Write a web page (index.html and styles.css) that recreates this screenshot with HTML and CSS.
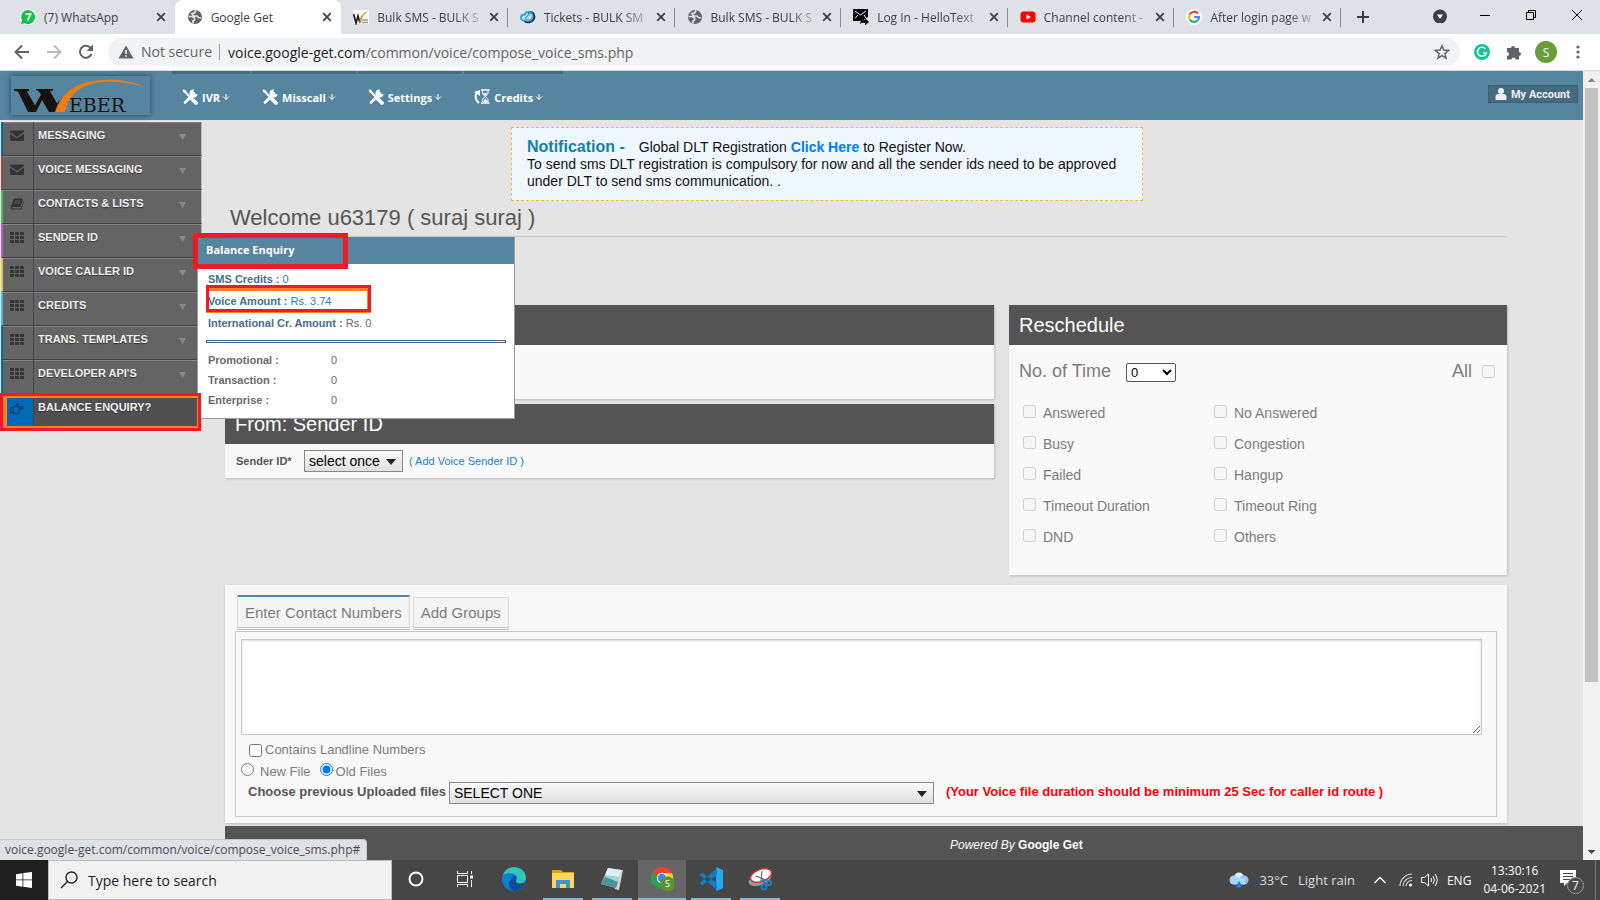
FILE: index.html
```html
<!DOCTYPE html>
<html lang="en">
<head>
<meta charset="utf-8">
<title>Google Get</title>
<link rel="stylesheet" href="styles.css">
</head>
<body>
<svg width="0" height="0" class="defs" aria-hidden="true">
  <symbol id="x" viewBox="0 0 10 10"><path d="M1.2 1.2l7.6 7.6M8.8 1.2L1.2 8.800" stroke="#3c4043" stroke-width="1.8" fill="none"/></symbol>
  <symbol id="globe" viewBox="0 0 16 16"><circle cx="8" cy="8" r="7" fill="#5f6368"/><path d="M1.500 7.500h4l2 1.500v2l-1.500 1v2.500M9 1.500L7.500 4 5 4.500 6.500 7H10l1.500 1.500L14 9" stroke="#e4e6ea" stroke-width="1.700" fill="none"/></symbol>
  <symbol id="tools" viewBox="0 0 16 16"><path d="M3 13.500L12 4.500" stroke="#fff" stroke-width="2.800" stroke-linecap="round"/><path d="M11.800 0.500a4 4 0 1 0 3.700 4.200l-2.300 0.800-1.700-1.500z" fill="#fff"/><path d="M2 1.800L9 9" stroke="#fff" stroke-width="2"/><path d="M9.500 9.500l4.500 4.500" stroke="#fff" stroke-width="3.800" stroke-linecap="round"/><path d="M0.500 1.500l1.200-1.200 2.600 1.700-2 2z" fill="#fff"/></symbol>
  <symbol id="down" viewBox="0 0 8 8"><path d="M4 1v5.500M1 3.500l3 3 3-3" stroke="#fff" stroke-width="1" fill="none"/></symbol>
  <symbol id="mail" viewBox="0 0 14 12"><path d="M0 1.500Q0 0.500 1 0.500h12q1 0 1 1v0.600L7 7 0 2.100z" fill="#333"/><path d="M0 3.800L7 8.500l7-4.700V10q0 1-1 1H1q-1 0-1-1z" fill="#333"/></symbol>
  <symbol id="grid" viewBox="0 0 14 12"><path d="M0 0h4v3H0zM5 0h4v3H5zM10 0h4v3h-4zM0 4h4v3H0zM5 4h4v3H5zM10 4h4v3h-4zM0 8h4v3H0zM5 8h4v3H5zM10 8h4v3h-4z" fill="#363636"/></symbol>
  <symbol id="book" viewBox="0 0 14 12"><path d="M4 0.500h9L10.500 9H2.500q-1 1 0 1.500h8.500L13.500 3l0.300 0.500-2 8H1.800Q0 11 0.800 8.500z" fill="#333"/><path d="M5 3h5.500M4.500 5H10" stroke="#666" stroke-width="0.800"/></symbol>
</svg>

<div class="window">
  <header class="tabstrip">
    <nav class="tabs" aria-label="Open tabs">
      <a class="tab" href="#"><svg viewBox="0 0 16 16"><circle cx="8" cy="8" r="8" fill="#fff"/><path d="M8 1a7 7 0 1 1-3.200 13.200L1 15l1-3.600A7 7 0 0 1 8 1z" fill="#10c24a"/><path d="M5.500 5.200h5L7.500 11.500" stroke="#fff" stroke-width="1.800" fill="none"/></svg><span>(7) WhatsApp</span><svg class="close"><use href="#x"/></svg></a>
      <a class="tab current" href="#"><svg><use href="#globe"/></svg><span>Google Get</span><svg class="close"><use href="#x"/></svg></a>
      <a class="tab long" href="#"><svg viewBox="0 0 16 16"><path fill="#fff" d="M0 1h16v14H0z"/><path d="M0.500 5l2.500 9 2-7 2 7" stroke="#222" stroke-width="1.800" fill="none"/><path d="M6 14Q8 2 16 2.500 9 4 8 14z" fill="#ec7d14"/><path d="M9 11h6M9 13.500h6" stroke="#998" stroke-width="1.500"/></svg><span>Bulk SMS - BULK S</span><svg class="close"><use href="#x"/></svg></a>
      <a class="tab long" href="#"><svg viewBox="0 0 16 16"><path d="M8 4Q13 2 14 6q1.500 5-4 7-4 1-5.500-1" stroke="#123450" stroke-width="2" fill="none"/><path d="M5 11.500Q1 11.500 1 8.500t4-3q1-3 4-2.500" stroke="#21aee0" stroke-width="2" fill="none"/><path d="M9 3q4 1 3.500 4.500T8 11 6.500 8t3-1.500" stroke="#21aee0" stroke-width="1.600" fill="none"/></svg><span>Tickets - BULK SM</span><svg class="close"><use href="#x"/></svg></a>
      <a class="tab long" href="#"><svg><use href="#globe"/></svg><span>Bulk SMS - BULK S</span><svg class="close"><use href="#x"/></svg></a>
      <a class="tab long" href="#"><svg viewBox="0 0 16 16"><path d="M0 0h15v8L9 12H0z" fill="#000"/><path d="M2 2l5.500 4L13 2M2 9.500L5 6M13 9l-2-3" stroke="#fff" stroke-width="1" fill="none"/><path d="M7 15q0-4 5-4V9l4 4-4 3.500V14q-3-1-5 1z" fill="#000"/></svg><span>Log In - HelloText</span><svg class="close"><use href="#x"/></svg></a>
      <a class="tab long" href="#"><svg viewBox="0 0 16 16"><rect x="0.500" y="2.500" width="15" height="11" rx="3" fill="#f00"/><path d="M6.500 5.500v5L11 8z" fill="#fff"/></svg><span>Channel content -</span><svg class="close"><use href="#x"/></svg></a>
      <a class="tab long" href="#"><svg viewBox="0 0 16 16"><circle cx="8" cy="8" r="8" fill="#fff"/><g fill="none" stroke-width="2.200"><path d="M12 4.500A5 5 0 0 0 3.700 5.500" stroke="#ea4335"/><path d="M3.700 5.500a5 5 0 0 0 0 5" stroke="#fbbc05"/><path d="M3.700 10.500a5 5 0 0 0 7.800 1" stroke="#34a853"/><path d="M11.500 11.500A5 5 0 0 0 13 8H8.200" stroke="#4285f4"/></g></svg><span>After login page w</span><svg class="close"><use href="#x"/></svg></a>
    </nav>
    <button class="bare newtab" aria-label="New tab"><svg viewBox="0 0 12 12"><path d="M6 0v12M0 6h12" stroke="#3c4043" stroke-width="2"/></svg></button>
    <div class="wincontrols">
      <button class="bare" aria-label="Search tabs"><svg viewBox="0 0 16 16"><circle cx="9" cy="9.500" r="7" fill="#3c4043"/><path d="M6 7.500h6L9 12z" fill="#fff"/></svg></button>
      <button class="bare" aria-label="Minimize"><svg viewBox="0 0 16 16"><path d="M3 8.500h10" stroke="#000"/></svg></button>
      <button class="bare" aria-label="Restore"><svg viewBox="0 0 16 16"><path d="M3.500 5.500h7v7h-7zM5.500 5V3.500h7v7H11" stroke="#000" fill="none"/></svg></button>
      <button class="bare" aria-label="Close"><svg viewBox="0 0 16 16"><path d="M3 3l10 10M13 3L3 13" stroke="#000"/></svg></button>
    </div>
  </header>

  <div class="toolbar">
    <button class="bare" aria-label="Back"><svg viewBox="0 0 16 16"><path d="M15 8H2M8 1.500L1.500 8 8 14.500" stroke="#5f6368" stroke-width="1.900" fill="none"/></svg></button>
    <button class="bare" aria-label="Forward"><svg viewBox="0 0 16 16"><path d="M1 8h13M8 1.500L14.500 8 8 14.500" stroke="#babcbe" stroke-width="1.900" fill="none"/></svg></button>
    <button class="bare" aria-label="Reload"><svg viewBox="0 0 16 16"><path d="M13.500 10A6 6 0 1 1 13 4.500" stroke="#5f6368" stroke-width="2" fill="none"/><path d="M15 0.500V7H8.500z" fill="#5f6368"/></svg></button>
    <div class="omnibox">
      <svg viewBox="0 0 16 16"><path d="M8 1.500L15.500 14.500H0.500z" fill="#5f6368"/><path d="M8 6v4M8 11.200v1.600" stroke="#fff" stroke-width="1.500"/></svg>
      <span class="insecure">Not secure</span>
      <span class="url"><b>voice.google-get.com</b>/common/voice/compose_voice_sms.php</span>
      <svg viewBox="0 0 16 16"><path d="M8 1.800l1.800 4.300 4.700 0.400-3.600 3.100 1.100 4.600-4-2.500-4 2.500 1.100-4.600L1.500 6.500l4.700-0.400z" fill="none" stroke="#5f6368" stroke-width="1.500"/></svg>
    </div>
    <button class="bare ext" aria-label="Grammarly"><svg viewBox="0 0 16 16"><circle cx="8" cy="8" r="8" fill="#15c39a"/><path d="M11.500 5A4.500 4.500 0 1 0 12.300 9H9M12.300 9l-1.500 3" stroke="#fff" stroke-width="1.500" fill="none"/></svg></button>
    <button class="bare ext" aria-label="Extensions"><svg viewBox="0 0 16 16"><path d="M1 4h4a2 2 0 1 1 4 0h4v4a2 2 0 1 1 0 4v3.500H9.500a2 2 0 1 0-4 0H1V12a2 2 0 1 0 0-4z" fill="#5f6368"/></svg></button>
    <button class="bare ext avatar" aria-label="Profile">S</button>
    <button class="bare ext" aria-label="Menu"><svg viewBox="0 0 16 16"><g fill="#5f6368"><circle cx="8" cy="3" r="1.600"/><circle cx="8" cy="8" r="1.600"/><circle cx="8" cy="13" r="1.600"/></g></svg></button>
  </div>

  <div class="viewport">
    <div class="page">
      <header class="site-header">
        <a class="logo" href="#" aria-label="Weber"><svg viewBox="0 0 139 39"><path d="M3 13h15v1.800l-2 0.700 8 14 6-11-2.500-3.500L25 14v-1h17v1.500l-3 0.800 7 12 5-5-4 13.700h-9l-7-12-6 12h-8L7 15.500 3 14.500z" fill="#17120f"/><path d="M44 36Q51 13 76 6 110-1 133 11 108 3 84 7 58 13 54 36z" fill="#ea7d13"/><text x="58" y="36" class="logo-text">EBER</text></svg></a>
        <nav class="mainnav">
          <a href="#"><svg><use href="#tools"/></svg>IVR<svg class="dn"><use href="#down"/></svg></a>
          <a href="#"><svg><use href="#tools"/></svg>Misscall<svg class="dn"><use href="#down"/></svg></a>
          <a href="#"><svg><use href="#tools"/></svg>Settings<svg class="dn"><use href="#down"/></svg></a>
          <a href="#"><svg viewBox="0 0 16 16"><path d="M5 14Q0 10 2.500 4" stroke="#fff" stroke-width="2" fill="none"/><path d="M0 3l6-2v6z" fill="#fff"/><path d="M7 1h8.500M7 14h8.500" stroke="#fff" stroke-width="1.600"/><path d="M8.500 2v2.500L11 7.500 8.500 10.500V13M14 2v2.500L11.500 7.500 14 10.500V13" stroke="#fff" fill="none"/><path d="M9 4h4.500l-2.200 3zM8.800 13l2.500-3.500L14 13z" fill="#fff"/></svg>Credits<svg class="dn"><use href="#down"/></svg></a>
        </nav>
        <button class="account"><svg viewBox="0 0 12 12"><circle cx="6" cy="3" r="3" fill="#f0f0f0"/><path d="M0.500 12V9q0-3 3-3h5q3 0 3 3v3z" fill="#f0f0f0"/></svg>My Account</button>
      </header>

      <div class="body">
        <nav class="sidebar">
          <a class="c-blue" href="#"><i><svg><use href="#mail"/></svg></i><span>MESSAGING</span></a>
          <a class="c-red" href="#"><i><svg><use href="#mail"/></svg></i><span>VOICE MESSAGING</span></a>
          <a class="c-green" href="#"><i><svg><use href="#book"/></svg></i><span>CONTACTS &amp; LISTS</span></a>
          <a class="c-purple" href="#"><i><svg><use href="#grid"/></svg></i><span>SENDER ID</span></a>
          <a class="c-yellow" href="#"><i><svg><use href="#grid"/></svg></i><span>VOICE CALLER ID</span></a>
          <a class="c-cyan" href="#"><i><svg><use href="#grid"/></svg></i><span>CREDITS</span></a>
          <a class="c-blue" href="#"><i><svg><use href="#grid"/></svg></i><span>TRANS. TEMPLATES</span></a>
          <a class="c-blue" href="#"><i><svg><use href="#grid"/></svg></i><span>DEVELOPER API'S</span></a>
          <a class="open" href="#"><i><svg viewBox="0 0 14 12"><path d="M0.600 4.500H3V10H0.600zM3 4.500L5.500 3 7 0.800Q8.500 0.800 8 2.500L7.500 4H12.500q1.200 0.800 0 1.800H8.500M9 5.800q1 0.900 0 1.800M8.800 7.600q0.800 0.900-0.300 1.700M8.500 9.300q0.300 1.500-1.200 1.500H5.500L3 10" fill="none" stroke="#173b57" stroke-width="1.100"/></svg></i><span>BALANCE ENQUIRY?</span></a>
        </nav>

        <main class="main">
          <section class="notice"><strong class="notice-title">Notification -</strong>Global DLT Registration <a href="#">Click Here</a> to Register Now.<br>To send sms DLT registration is compulsory for now and all the sender ids need to be approved under DLT to send sms communication. .</section>
          <h1>Welcome u63179 ( suraj suraj )</h1>

          <div class="columns">
            <div class="left">
              <section class="card first"><h2>&nbsp;</h2><div class="card-body"></div></section>
              <section class="card">
                <h2>From: Sender ID</h2>
                <div class="card-body sender">
                  <label for="sender">Sender ID*</label>
                  <span class="pick"><select id="sender"><option>select once</option></select></span>
                  <a href="#">( Add Voice Sender ID )</a>
                </div>
              </section>
            </div>
            <section class="card resched">
              <h2>Reschedule</h2>
              <div class="card-body">
                <div class="times">
                  <label for="times">No. of Time</label>
                  <select id="times"><option>0</option></select>
                  <label class="all">All <input type="checkbox" disabled></label>
                </div>
                <div class="checks">
                  <label><input type="checkbox" disabled>Answered</label><label><input type="checkbox" disabled>No Answered</label>
                  <label><input type="checkbox" disabled>Busy</label><label><input type="checkbox" disabled>Congestion</label>
                  <label><input type="checkbox" disabled>Failed</label><label><input type="checkbox" disabled>Hangup</label>
                  <label><input type="checkbox" disabled>Timeout Duration</label><label><input type="checkbox" disabled>Timeout Ring</label>
                  <label><input type="checkbox" disabled>DND</label><label><input type="checkbox" disabled>Others</label>
                </div>
              </div>
            </section>
          </div>

          <section class="contacts">
            <div class="ctabs">
              <button class="on">Enter Contact Numbers</button>
              <button>Add Groups</button>
            </div>
            <div class="cbox">
              <textarea aria-label="Contact numbers"></textarea>
              <label class="landline"><input type="checkbox">Contains Landline Numbers</label>
              <div class="radios">
                <label class="new"><input type="radio" name="file">New File</label>
                <label><input type="radio" name="file" checked>Old Files</label>
              </div>
              <div class="files">
                <label for="files">Choose previous Uploaded files</label>
                <span class="pick wide"><select id="files"><option>SELECT ONE</option></select></span>
                <strong>(Your Voice file duration should be minimum 25 Sec for caller id route )</strong>
              </div>
            </div>
          </section>
          <footer class="site-footer"><em>Powered By</em> <b>Google Get</b></footer>
        </main>

        <aside class="popup">
          <h3>Balance Enquiry</h3>
          <div class="popup-body">
            <p><b>SMS Credits :</b> <a href="#">0</a></p>
            <p><b>Voice Amount :</b> <a href="#">Rs. 3.74</a></p>
            <p><b>International Cr. Amount :</b> Rs. 0</p>
            <hr>
            <table>
              <tr><th>Promotional :</th><td>0</td></tr>
              <tr><th>Transaction :</th><td>0</td></tr>
              <tr><th>Enterprise :</th><td>0</td></tr>
            </table>
          </div>
        </aside>
        <div class="mark mark-title"></div>
        <div class="mark mark-amount"></div>
        <div class="mark mark-menu"></div>
      </div>
    </div>
    <div class="scrollbar"><i class="up"></i><div class="thumb"></div><i class="dnarrow"></i></div>
    <div class="status">voice.google-get.com/common/voice/compose_voice_sms.php#</div>
  </div>

  <footer class="taskbar">
    <button class="bare start" aria-label="Start"><svg viewBox="0 0 16 16"><path d="M0 2.200L6.500 1.200V7.500H0zM7.300 1.100L16 0v7.500H7.300zM0 8.300h6.500v6.400L0 13.800zM7.300 8.300H16V16l-8.700-1.200z" fill="#fff"/></svg></button>
    <label class="search"><svg viewBox="0 0 18 18"><circle cx="11.500" cy="6.500" r="5.500" fill="none" stroke="#222" stroke-width="1.400"/><path d="M7.500 10.500L1 17" stroke="#222" stroke-width="1.500"/></svg><input type="text" placeholder="Type here to search" aria-label="Type here to search"></label>
    <button class="bare app" aria-label="Cortana"><svg class="s16" viewBox="0 0 16 16"><circle cx="8" cy="8" r="6.500" fill="none" stroke="#fff" stroke-width="2"/></svg></button>
    <button class="bare app" aria-label="Task view"><svg class="s16" viewBox="0 0 16 16"><path d="M0.500 0v2.500h10V0M0.500 16v-2.500h10V16M0.500 4.500h10v7h-10zM14.500 0v3M14.500 9v7" stroke="#fff" fill="none"/><path d="M13 4.500h3v3h-3z" fill="#fff"/></svg></button>
    <button class="bare app" aria-label="Edge"><svg viewBox="0 0 24 24"><circle cx="12" cy="12" r="12" fill="#0c7fd4"/><path d="M1 8Q4 0 12 0q11 1 12 10 0 6-6 6-4 0-4-2 3-5-2-7Q5 5 1 8z" fill="#35c4b5"/><path d="M9 13q1-4 4-4 2 2 1 5 0 3 5 3 3 0 4-1-4 8-11 8Q6 22 7 15z" fill="#0b4c9c"/><path d="M13.500 14q0 3 5 3 4-0.500 5-3 0 4-6 4.500-5 0-4-4.500z" fill="#444"/></svg></button>
    <button class="bare app run" aria-label="File Explorer"><svg viewBox="0 0 24 24"><path d="M1 3h9l2 2h11v16H1z" fill="#e0a106"/><path d="M1 6h22v15H1z" fill="#ffd65c"/><path d="M5 13h14v8h-4v-4H9v4H5z" fill="#3b93dc"/></svg></button>
    <button class="bare app run" aria-label="Notepad"><svg viewBox="0 0 24 24"><path d="M8 2l15 1-4 20-4-1z" fill="#d8d4bd"/><path d="M8 1l13 2-5 18L1 17z" fill="#9fd0dc"/><path d="M8 1l13 2-2 7L5 8z" fill="#dcf0f2"/><path d="M5 10l-4 7 15 4 2-6z" fill="#50909f"/></svg></button>
    <button class="bare app run active" aria-label="Chrome"><svg viewBox="0 0 24 24"><circle cx="12" cy="11" r="11" fill="#e64335"/><path d="M2.500 5.500A11 11 0 0 0 12 22l4-9z" fill="#2ba24c"/><path d="M12 22a11 11 0 0 0 10-16H12z" fill="#fcc934"/><circle cx="12" cy="11" r="5.200" fill="#fff"/><circle cx="12" cy="11" r="4.200" fill="#4285f4"/><circle cx="17.500" cy="17" r="7.500" fill="#5b9435"/><text x="17.500" y="20" class="badge-text">S</text></svg></button>
    <button class="bare app run" aria-label="Visual Studio Code"><svg viewBox="0 0 24 24"><path d="M17 0L24 3v18l-7 3z" fill="#29a8f0"/><path d="M18 1L0.500 16 3 18.500 18 8zM18 23L0.500 8 3 5.500 18 16z" fill="#0a7fca"/></svg></button>
    <button class="bare app run" aria-label="Snipping Tool"><svg viewBox="0 0 24 24"><ellipse cx="12" cy="12" rx="12" ry="6" transform="rotate(-20 12 12)" fill="#999"/><ellipse cx="13" cy="8.500" rx="11" ry="6" transform="rotate(-20 13 8.500)" fill="#fff" stroke="#d5333a" stroke-width="1.500"/><path d="M8 9l10 4M14 4l-1 10" stroke="#555"/><circle cx="16" cy="20" r="2.500" fill="none" stroke="#1f7fc4" stroke-width="1.800"/><circle cx="21" cy="16" r="2.200" fill="none" stroke="#1f7fc4" stroke-width="1.800"/><path d="M13 13l6 4M15 12l1 6" stroke="#1f7fc4" stroke-width="1.500"/></svg></button>
    <div class="tray">
      <button class="bare weather"><svg viewBox="0 0 20 16"><circle cx="10" cy="5.500" r="5" fill="#d9efff"/><circle cx="5" cy="8" r="4.500" fill="#a9d7fb"/><circle cx="15" cy="8" r="4.500" fill="#8cc5f7"/><path d="M5 6h11v6.500H5z" fill="#a9d7fb"/><path d="M10 9q3 4 2.500 5.500-2.500 3-5 0Q7.500 13 10 9z" fill="#1c7ddb"/></svg><span>33°C</span><span>Light rain</span></button>
      <svg class="chev" viewBox="0 0 12 12"><path d="M0.500 9L6 3.500 11.500 9" stroke="#fff" stroke-width="1.300" fill="none"/></svg>
      <svg class="net" viewBox="0 0 14 14"><g stroke="#ddd" stroke-width="1.100" fill="none"><path d="M1 13A12 12 0 0 1 13 1M4 13A9 9 0 0 1 13 4.500M7 13a6 6 0 0 1 6-5.500"/></g><circle cx="11.500" cy="12" r="1.600" fill="#fff"/></svg>
      <svg class="vol" viewBox="0 0 17 14"><path d="M0.500 4.500h3L7.500 1v12L3.500 9.500h-3zM10 5q1.500 2 0 4M12 3q3 4 0 8M14 1q4.500 6 0 12" stroke="#fff" fill="none"/></svg>
      <span class="lang">ENG</span>
      <time class="clock">13:30:16<br>04-06-2021</time>
      <button class="bare action" aria-label="7 notifications"><svg viewBox="0 0 24 24"><path d="M0 0h16v13H7l-3 3v-3H0z" fill="#fff"/><path d="M3 3.500h10M3 6.500h10M3 9.500h7" stroke="#444"/><circle cx="15.500" cy="15.500" r="8" fill="#484848" stroke="#999"/><text x="15.500" y="19.500" class="badge-text seven">7</text></svg></button>
    </div>
  </footer>
</div>
</body>
</html>
```

FILE: styles.css
```css
* { box-sizing: border-box; }
body { margin: 0; font-family: "Liberation Sans", Arial, sans-serif; color: #555; }
a { text-decoration: none; color: #1a80c4; }
h1, h2, h3, p { margin: 0; font-weight: normal; }
.defs { position: absolute; }
.bare { border: 0; padding: 0; background: none; display: flex; align-items: center; justify-content: center; font: inherit; }
svg { display: block; flex: none; width: 16px; height: 16px; }
.window { display: flex; flex-direction: column; height: 100vh; overflow: hidden; }

/* browser chrome */
.tabstrip { display: flex; height: 34px; background: #dee1e6; padding-left: 8px; flex: none; font: 12px "Open Sans", sans-serif; }
.tabs { display: grid; grid-template-columns: repeat(8, 1fr); flex: 0 1 1333px; }
.tab { display: flex; align-items: center; padding: 0 9px 0 12px; color: #3c4043; position: relative; min-width: 0; }
.tab span { flex: 1; margin-left: 8px; white-space: nowrap; }
.tab.long span { mask-image: linear-gradient(90deg, #000 78px, #0003 104px); }
.tab .close { width: 10px; height: 10px; }
.tab:nth-child(n+3)::after { content: ""; position: absolute; right: 0; top: 8px; height: 19px; border-right: 1px solid #85888c; }
.tab.current { background: #fff; border-radius: 8px 8px 0 0; }
.newtab { width: 44px; }
.newtab svg { width: 12px; height: 12px; }
.wincontrols { margin-left: auto; display: flex; padding-bottom: 5px; }
.wincontrols button { width: 46px; }
.toolbar { display: flex; align-items: center; height: 37px; padding: 0 6px; border-bottom: 1px solid #d5d7da; background: #fff; flex: none; font: 14px "Open Sans", sans-serif; }
.toolbar > button { width: 32px; height: 28px; }
.toolbar > .avatar { width: 22px; height: 22px; margin: 0 5px; border-radius: 50%; background: #689f38; color: #fff; font-size: 12px; }
.omnibox { flex: 1; display: flex; align-items: center; height: 28px; margin: 0 6px; padding: 0 10px; border-radius: 14px; background: #f1f3f4; }
.insecure { color: #5f6368; margin-left: 7px; padding-right: 7px; border-right: 1px solid #9a9da1; line-height: 16px; }
.url { flex: 1; color: #5f6368; margin-left: 8px; white-space: nowrap; }
.url b { font-weight: normal; color: #202124; }

/* web page */
.viewport { flex: 1; display: flex; min-height: 0; position: relative; }
.page { flex: 1; min-width: 0; display: flex; flex-direction: column; background: #e4e4e4; overflow: hidden; }
.site-header { display: flex; align-items: flex-start; background: #56859f; height: 49px; flex: none; padding-right: 5px; }
.logo { margin: 5px 22px 0 11px; box-shadow: 0 0 6px #234c60; }
.logo svg { width: 139px; height: 39px; }
.logo-text { font: 19px "DejaVu Serif", serif; fill: #17120f; }
.mainnav { display: flex; gap: 2px; font: bold 11px "Open Sans", sans-serif; }
.mainnav a { display: flex; align-items: center; height: 49px; padding: 0 20px 0 10px; border-top: 3px solid #446b7f; color: #fff; }
.mainnav svg { margin-right: 4px; }
.mainnav .dn { width: 8px; height: 8px; margin: 0 0 0 2px; }
.account { margin: 14px 0 0 auto; display: flex; align-items: center; gap: 4px; height: 18px; padding: 0 7px 0 6px; border: 1px solid #3a6074; background: #446b7f; color: #f0f0f0; font: bold 11px Roboto, sans-serif; }
.account svg { width: 12px; height: 12px; }
.body { flex: 1; display: flex; position: relative; }
.sidebar { width: 202px; flex: none; padding-top: 2px; }
.sidebar a { display: flex; height: 34px; padding: 0; margin: 0 0 0 1px; border-left: 2px solid #0069b0; border-right: 1px solid #bbb; background: #646464; border-bottom: 1px solid #404040; box-shadow: inset 0 1px #858585; color: #f0f0f0; font: bold 11px/27px "Liberation Sans", sans-serif; position: relative; text-shadow: 0 1px 1px #333; }
.sidebar i { width: 31px; border-right: 1px solid #444; display: flex; align-items: center; justify-content: center; padding: 0 2px 5px 0; }
.sidebar i svg { width: 14px; height: 12px; }
.sidebar span { padding-left: 4px; flex: 1; }
.sidebar a::after { content: ""; margin: 12px 15px 0 0; width: 7px; height: 6px; background: #8a8a8a; clip-path: polygon(0 0, 100% 0, 50% 100%); }
.sidebar .c-red { border-left-color: #a04848; }
.sidebar .c-green { border-left-color: #4dba70; }
.sidebar .c-purple { border-left-color: #b85fd0; }
.sidebar .c-yellow { border-left-color: #d8cf4a; }
.sidebar .c-cyan { border-left-color: #3cc0de; }
.sidebar .open { background: #505050; box-shadow: none; border-bottom: 0; }
.sidebar .open::after { content: none; }
.sidebar .open i { background: #006ab4; }
.main { flex: 1; min-width: 0; padding: 7px 0 0 23px; display: flex; flex-direction: column; }
.notice { width: 632px; margin-left: 286px; padding: 10px 16px 10px 15px; border: 1px dashed #f9b83c; background: #f0f8ff; color: #111; font-size: 14px; line-height: 17px; }
.notice a { color: #007bff; font-weight: bold; }
.notice-title { font-size: 16px; color: #0f80aa; margin-right: 14px; }
h1 { font-size: 22px; line-height: 32px; margin-right: 76px; padding: 1px 0 2px 5px; border-bottom: 1px solid #c9c9c9; }
.columns { display: grid; grid-template-columns: 769fr 498fr; gap: 15px; margin: 68px 76px 0 0; }
.left { display: flex; flex-direction: column; gap: 5px; }
.card { background: #f9f9f9; box-shadow: 1px 1px 2px #bbb; }
.card h2 { background: #545454; color: #fff; font-size: 20px; line-height: 40px; padding-left: 10px; }
.first .card-body { height: 54px; }
.sender { display: flex; align-items: center; height: 34px; padding-left: 11px; font-size: 11px; }
.sender label { font-weight: bold; width: 68px; }
.sender a { margin-left: 6px; }
.pick { position: relative; display: flex; }
.pick::after { content: ""; position: absolute; right: 7px; top: 9px; width: 10px; height: 6px; background: #222; clip-path: polygon(0 0, 100% 0, 50% 100%); pointer-events: none; }
.pick select { appearance: none; width: 99px; height: 22px; padding: 0 4px; border: 1px solid #888; border-radius: 0; background: linear-gradient(#fafafa, #e0e0e0); color: #000; font: 14px "Liberation Sans", sans-serif; }
.wide, .wide select { flex: 0 0 485px; width: 485px; }
.resched .card-body { padding: 15px 12px 12px 10px; color: #7c7c7c; }
.times { display: flex; align-items: center; font-size: 18px; line-height: 22px; }
.times select { width: 50px; height: 19px; margin: 3px 0 0 15px; padding: 0; border: 1px solid #555; border-radius: 2px; background: #fff; color: #000; font: 13px "Liberation Sans", sans-serif; }
.all { margin-left: auto; display: flex; align-items: center; gap: 10px; }
input[type=checkbox], input[type=radio] { width: 13px; height: 13px; margin: 0; flex: none; }
.checks { display: grid; grid-template-columns: 191px 1fr; grid-auto-rows: 31px; padding: 15px 0 0 4px; font-size: 14px; margin-bottom: 11px; }
.checks label { display: flex; align-items: center; gap: 7px; }
.checks input { margin-bottom: 2px; }
.contacts { margin: 10px 76px 3px 0; padding: 10px 10px 6px 10px; background: #f9f9f9; box-shadow: 0 1px 2px #bbb; }
.ctabs { display: flex; align-items: flex-end; gap: 3px; padding-left: 2px; margin-bottom: 1px; }
.ctabs button { height: 33px; padding: 0 7px; border: 1px solid #d8d8d8; border-bottom: 3px double #c4c4c4; background: #f5f5f5; color: #7c7c7c; font: 15px "Liberation Sans", sans-serif; }
.ctabs .on { height: 35px; border-top: 2px solid #56859f; }
.cbox { border: 1px solid #c8c8c8; padding: 7px 14px 12px 5px; font-size: 13px; color: #7c7c7c; }
textarea { display: block; width: 100%; height: 96px; border: 1px solid #c8c8c8; box-shadow: inset 0 1px 3px #ddd; background: #fff; }
.landline { display: flex; align-items: center; gap: 3px; padding-left: 8px; margin-top: 5px; line-height: 20px; }
.radios { display: flex; gap: 9px; line-height: 23px; }
.radios label { display: flex; gap: 3px; }
.radios .new { gap: 6px; }
.radios input { margin-top: 3px; }
.files { display: flex; align-items: center; padding-left: 7px; gap: 12px; margin-top: -1px; }
.files label { font-weight: bold; color: #555; margin: 0 -9px 3px 0; }
.files strong { color: red; margin-bottom: 3px; }
.site-footer { flex: 1; background: #545454; color: #fff; font-size: 12px; padding: 12px 0 0 725px; line-height: 14px; font-size: 12px; }

/* balance popup */
.popup { position: absolute; left: 197px; top: 117px; width: 318px; background: #fff; border: 1px solid #999; border-top: 0; }
.popup h3 { background: #56859f; color: #fff; font: bold 11px/25px "Open Sans", sans-serif; padding: 0 0 2px 8px; }
.popup-body { padding: 4px 8px 8px; font-size: 11px; line-height: 22px; }
.popup p { padding-left: 2px; color: #666; }
.popup p b { color: #42708a; }
.popup hr { border: 1px solid #42678a; height: 3px; margin: 6px 0 7px; background: #fff; }
.popup table { border-spacing: 0; line-height: 20px; color: #6a6a6a; }
.popup th { width: 125px; text-align: left; padding: 0 2px; }
.popup td { padding: 0; }
.mark { position: absolute; pointer-events: none; }
.mark-title { left: 193px; top: 113px; width: 155px; height: 36px; border: 5px solid #ed1c24; }
.mark-amount { left: 206px; top: 165px; width: 165px; height: 27px; border: 3px solid #ed1c24; box-shadow: inset -1px 3px #ff7f27, 0 1px #ff7f27; }
.mark-menu { left: 0; top: 273px; width: 201px; height: 38px; border: 3px solid #ed1c24; box-shadow: inset 4px 2px #ff7f27, inset -1px -2px #ff7f27; }

.scrollbar { width: 17px; flex: none; background: #f1f1f1; display: flex; flex-direction: column; align-items: center; }
.thumb { width: 13px; flex: 0 1 594px; background: #c1c1c1; }
.scrollbar i { width: 8px; height: 4px; margin: 7px 0 6px; background: #888; clip-path: polygon(50% 0, 100% 100%, 0 100%); }
.scrollbar .dnarrow { margin-top: auto; background: #444; clip-path: polygon(0 0, 100% 0, 50% 100%); }
.status { position: absolute; left: 0; bottom: 0; padding: 0 6px 0 5px; background: #dee1e6; border-top: 1px solid #c4c6ca; border-right: 1px solid #c4c6ca; border-top-right-radius: 4px; color: #4a4d51; font: 12px/20px "Open Sans", sans-serif; }

/* taskbar */
.taskbar { display: flex; flex: none; height: 40px; background: #464646; font: 12px "Open Sans", sans-serif; color: #fff; }
.start { width: 48px; background: #1f1f1f; }
.search { display: flex; align-items: center; width: 344px; padding-left: 11px; gap: 10px; background: #f1f1f1; border: 1px solid #bbb; }
.search svg { width: 18px; height: 18px; }
.search input { flex: 1; border: 0; padding: 0; background: none; font: 14px "Open Sans", sans-serif; }
.search input::placeholder { color: #222; }
.app { width: 40px; margin: 0 5px 0 4px; border-bottom: 2px solid transparent; }
.app svg { width: 24px; height: 24px; }
.app svg.s16 { width: 16px; height: 16px; }
.run { border-bottom-color: #76b9ed; }
.app.active { width: 48px; background: #666; margin: 0 1px; }
.badge-text { font: 9px "Open Sans", sans-serif; fill: #fff; text-anchor: middle; }
.seven { font-size: 12px; }
.tray { margin-left: auto; display: flex; align-items: center; margin-right: 4px; padding-right: 11px; border-right: 1px solid #777; color: #fff; }
.weather { color: #ddd; font-size: 13px; gap: 10px; }
.weather svg { width: 20px; height: 16px; }
.chev { width: 12px; height: 12px; margin: 0 13px 0 19px; }
.net { width: 14px; height: 14px; }
.vol { width: 17px; height: 14px; margin: 0 9px 0 8px; }
.clock { margin: 0 14px 0 12px; line-height: 18px; text-align: center; }
.action svg { width: 24px; height: 24px; margin-top: 4px; }
```
